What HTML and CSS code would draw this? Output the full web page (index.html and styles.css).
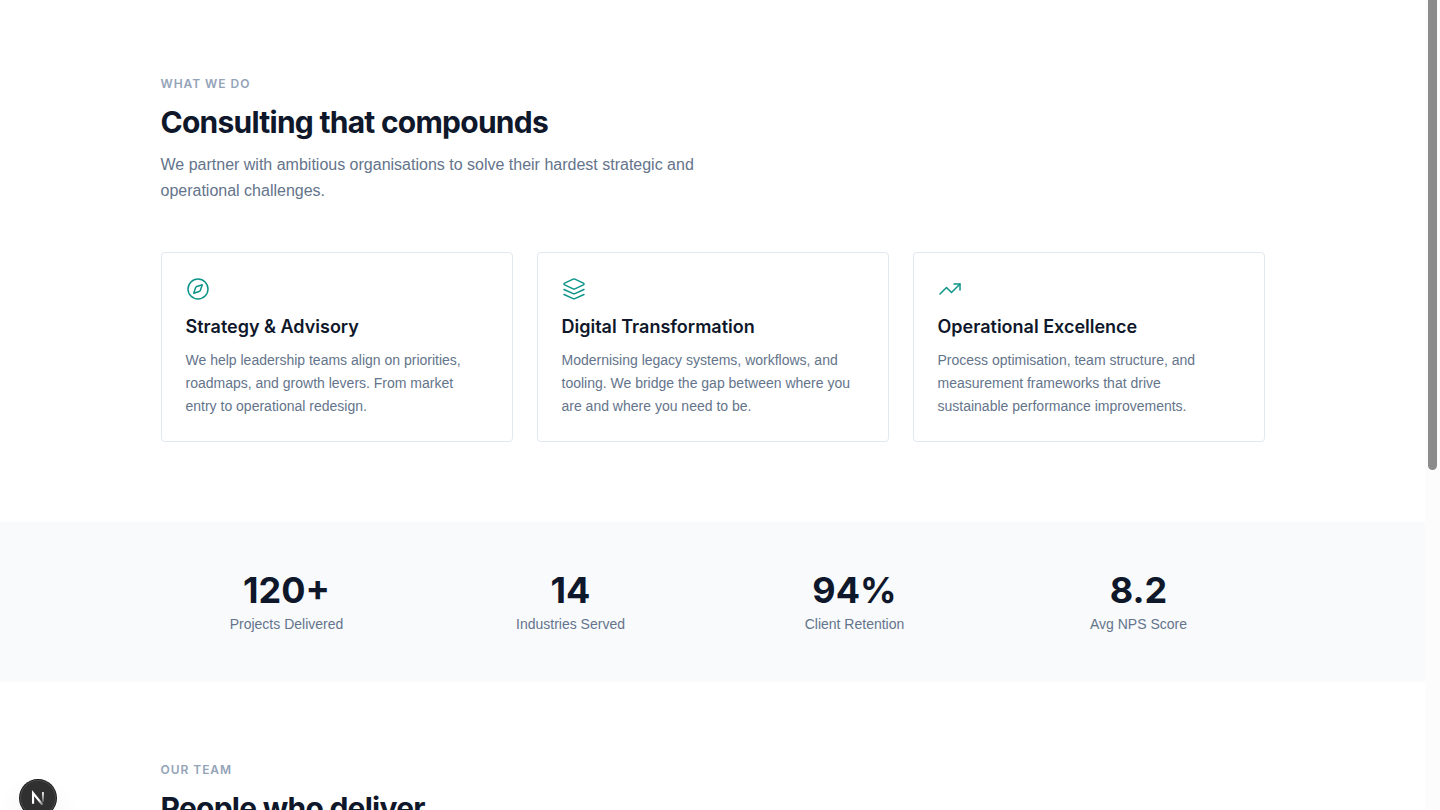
FILE: index.html
```html
<!DOCTYPE html>
<html lang="en">
<head>
<meta charset="utf-8">
<meta name="viewport" content="width=device-width, initial-scale=1">
<title>Consulting that compounds</title>
<link rel="stylesheet" href="styles.css">
</head>
<body>
<div class="window">
  <main class="page">
    <section class="section section-services">
      <div class="container">
        <header class="section-header">
          <p class="eyebrow">What we do</p>
          <h2 class="title">Consulting that compounds</h2>
          <p class="lead">We partner with ambitious organisations to solve their hardest strategic and operational challenges.</p>
        </header>
        <div class="cards">
          <article class="card">
            <svg class="card-icon" viewBox="0 0 24 24" aria-hidden="true"><circle cx="12" cy="12" r="10"/><path d="m16.24 7.76-1.804 5.411a2 2 0 0 1-1.265 1.265L7.76 16.24l1.804-5.411a2 2 0 0 1 1.265-1.265z"/></svg>
            <h3 class="card-title">Strategy &amp; Advisory</h3>
            <p class="card-text">We help leadership teams align on priorities, roadmaps, and growth levers. From market entry to operational redesign.</p>
          </article>
          <article class="card">
            <svg class="card-icon" viewBox="0 0 24 24" aria-hidden="true"><path d="M12.83 2.18a2 2 0 0 0-1.66 0L2.6 6.08a1 1 0 0 0 0 1.83l8.58 3.91a2 2 0 0 0 1.66 0l8.58-3.9a1 1 0 0 0 0-1.83z"/><path d="m2 12.500 9.170 4.170a2 2 0 0 0 1.660 0L22 12.500"/><path d="m2 17.500 9.170 4.170a2 2 0 0 0 1.660 0L22 17.500"/></svg>
            <h3 class="card-title">Digital Transformation</h3>
            <p class="card-text">Modernising legacy systems, workflows, and tooling. We bridge the gap between where you are and where you need to be.</p>
          </article>
          <article class="card">
            <svg class="card-icon" viewBox="0 0 24 24" aria-hidden="true"><path d="m2 17 6.500-6.500 5 5L22 7"/><path d="M16 7h6v6"/></svg>
            <h3 class="card-title">Operational Excellence</h3>
            <p class="card-text">Process optimisation, team structure, and measurement frameworks that drive sustainable performance improvements.</p>
          </article>
        </div>
      </div>
    </section>
    <section class="stats">
      <dl class="container stats-grid">
        <div class="stat"><dt class="stat-label">Projects Delivered</dt><dd class="stat-value">120+</dd></div>
        <div class="stat"><dt class="stat-label">Industries Served</dt><dd class="stat-value">14</dd></div>
        <div class="stat"><dt class="stat-label">Client Retention</dt><dd class="stat-value">94%</dd></div>
        <div class="stat"><dt class="stat-label">Avg NPS Score</dt><dd class="stat-value">8.2</dd></div>
      </dl>
    </section>
    <section class="section">
      <div class="container">
        <header class="section-header">
          <p class="eyebrow">Our team</p>
          <h2 class="title">People who deliver</h2>
        </header>
      </div>
    </section>
  </main>
  <div class="scrollbar" aria-hidden="true"><div class="scrollbar-thumb"></div></div>
</div>
<button class="dev-badge" type="button" aria-label="Open Next.js Dev Tools">
  <svg class="dev-badge-logo" viewBox="0 0 40 40" fill="none" aria-hidden="true">
    <defs>
      <linearGradient id="diagonal" x1="21" y1="22" x2="27" y2="30" gradientUnits="userSpaceOnUse"><stop stop-color="#fff"/><stop offset="1" stop-color="#fff" stop-opacity="0"/></linearGradient>
      <linearGradient id="stem" gradientUnits="userSpaceOnUse" x1="25" y1="13" x2="25" y2="27"><stop stop-color="#fff"/><stop offset="1" stop-color="#fff" stop-opacity="0"/></linearGradient>
    </defs>
    <path d="M14.500 26.500V14.500L25 27.500" stroke="url(#diagonal)" stroke-width="2.400"/>
    <path d="M25.500 13.500V24.500" stroke="url(#stem)" stroke-width="2.200"/>
  </svg>
</button>
</body>
</html>
```
FILE: styles.css
```css
* { box-sizing: border-box; margin: 0; padding: 0; }

body {
  background: #fff;
  color: #0f172a;
  font-family: "Liberation Sans", Arial, sans-serif;
  overflow: hidden;
}

.window { display: flex; height: 100vh; }
.page { flex: 1; min-width: 0; overflow: hidden; }

.container { max-width: 1152px; margin: 0 auto; padding: 0 24px; }
.section { padding: 80px 0; }
.section-services { padding-top: 76px; }

.eyebrow, .title, .card-title, .stat-value { font-family: Inter, sans-serif; }

.section-header { max-width: 576px; margin-bottom: 48px; }
.eyebrow {
  margin-bottom: 12px;
  color: #94a3b8;
  font-size: 12px;
  font-weight: 600;
  line-height: 16px;
  letter-spacing: 0.08em;
  text-transform: uppercase;
}
.title {
  margin-bottom: 12px;
  font-size: 30px;
  font-weight: 700;
  line-height: 36px;
  letter-spacing: -0.025em;
}
.lead { color: #64748b; font-size: 16px; line-height: 26px; }

.cards { display: grid; grid-template-columns: repeat(3, 1fr); gap: 24px; }
.card { padding: 24px 24px 23px; border: 1px solid #e2e8f0; border-radius: 4px; }
.card-icon {
  display: block;
  width: 24px;
  height: 24px;
  margin-bottom: 12px;
  fill: none;
  stroke: #0d9488;
  stroke-width: 1.5;
  stroke-linecap: round;
  stroke-linejoin: round;
}
.card-title { margin-bottom: 8px; font-size: 18px; font-weight: 600; line-height: 28px; }
.card-text { max-width: 292px; color: #64748b; font-size: 14px; line-height: 23px; }

.stats { padding: 48px 0; background: #f8fafc; }
.stats-grid { display: grid; grid-template-columns: repeat(4, 1fr); gap: 32px; }
.stat { display: flex; flex-direction: column-reverse; gap: 4px; text-align: center; }
.stat-value { font-size: 36px; font-weight: 700; line-height: 40px; }
.stat-label { color: #64748b; font-size: 14px; line-height: 20px; }

.scrollbar { width: 15px; padding: 0 3px; background: #fcfcfc; }
.scrollbar-thumb { height: 58%; border-radius: 0 0 5px 5px; background: #8b8b8b; }

.dev-badge {
  position: fixed;
  left: 20px;
  bottom: -6px;
  width: 36px;
  height: 36px;
  border: 0;
  border-radius: 50%;
  background: #303030;
  box-shadow: 0 0 0 1px #171717, inset 0 0 0 1px #484848, 0 16px 32px -8px rgba(0, 0, 0, 0.24);
}
.dev-badge-logo { display: block; width: 36px; height: 36px; }
```
